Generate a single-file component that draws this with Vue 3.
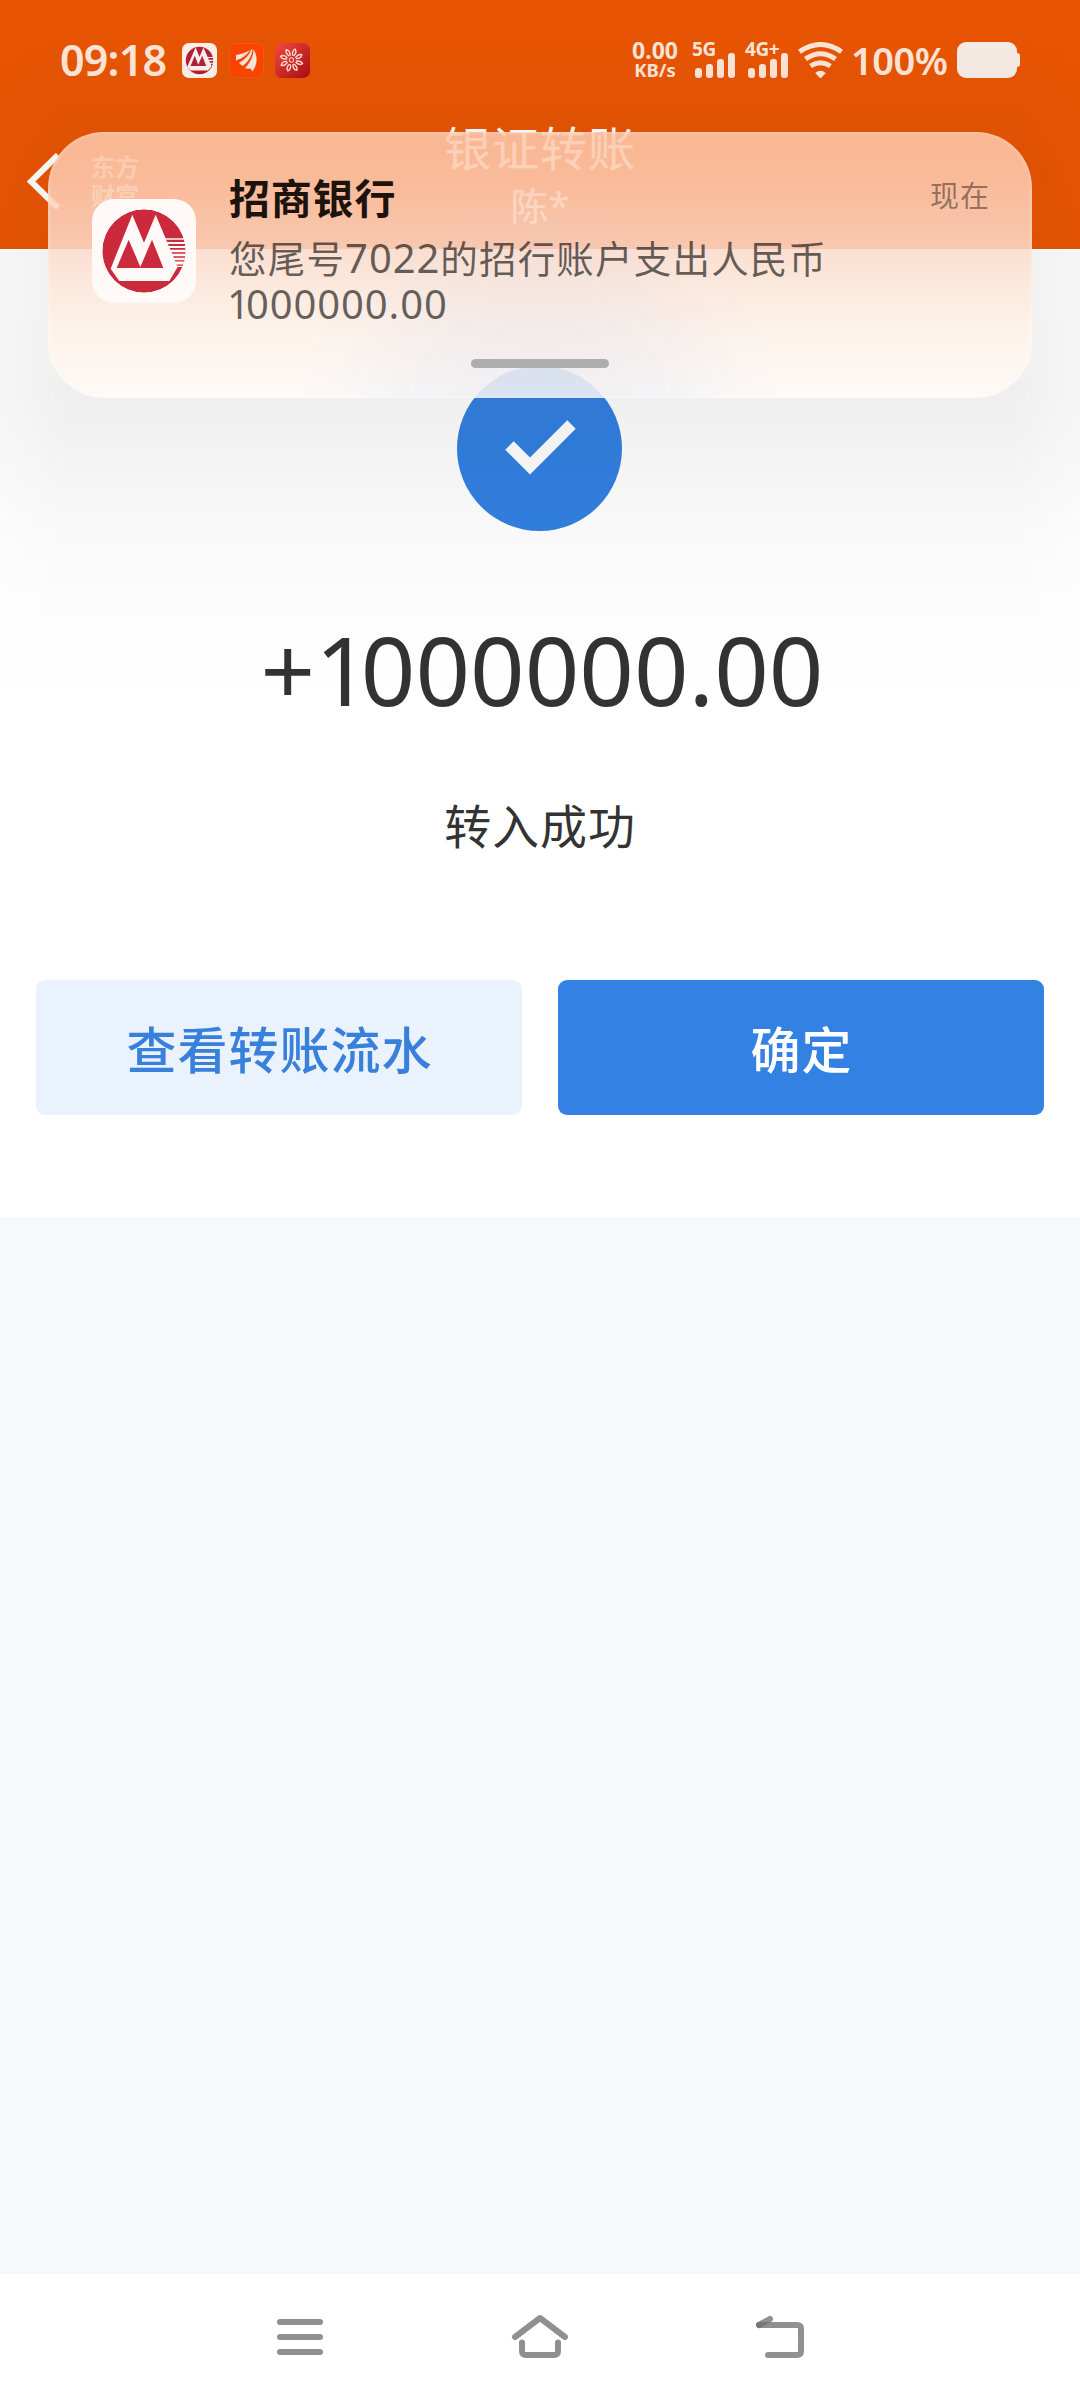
<script setup>
const signals = [
  { label: '5G', cls: 'sim-a' },
  { label: '4G+', cls: 'sim-b' },
]
const bars = [10, 14, 19, 25]
const petals = [0, 45, 90, 135, 180, 225, 270, 315]
const stripes = [356, 368, 380, 392, 404, 416, 428]
</script>

<template>
  <div class="phone">
    <header class="header">
      <div class="status">
        <span class="clock">09:18</span>
        <span class="tray">
          <svg class="app" viewBox="276 236 312 312">
            <rect x="276" y="236" width="312" height="312" rx="62" fill="#fff3ee" />
            <circle cx="432" cy="392" r="122" fill="#b5203a" />
            <g stroke="#fff3ee" stroke-width="10"><path d="M500 365H556M500 391H556M500 417H556" /></g>
            <path d="M322 450L397 276L432 360L467 276L540 440L508 482H352Z" fill="#fff3ee" />
            <path d="M352 440L390 350L421 430L456 350L492 440Z" fill="#b5203a" />
          </svg>
          <svg class="app" viewBox="0 0 35 35">
            <rect x=".5" y=".5" width="34" height="34" rx="6.5" fill="#ff4600" stroke="#f25a1c" />
            <path d="M7 12C12 11.500 17 9.500 21 7C18 12 13 15.500 7 17.500Z" fill="#ffe8de" />
            <path d="M10 20C16 16.500 20.500 12 22 6.800L23.500 6C23 13 19 19 13.500 23Z" fill="#ffe8de" />
            <path d="M16 25C21 20 24.500 13 24.500 6.500C28.500 12 29 21 23.500 28.500L21.500 25.500C20 26 18 26 16 25Z" fill="#ffe8de" />
          </svg>
          <svg class="app" viewBox="0 0 35 35">
            <defs>
              <linearGradient id="redTile" x1="0" y1="0" x2="1" y2="1">
                <stop offset="0" stop-color="#fb4a43" />
                <stop offset="1" stop-color="#a80d12" />
              </linearGradient>
            </defs>
            <rect width="35" height="35" rx="7" fill="url(#redTile)" />
            <g fill="none" stroke="#ffe0d8" stroke-width="1.4">
              <path
                v-for="a in petals" :key="a" d="M16.300 12.500Q13.800 8 16.500 5.500Q19.800 8 17.200 12.500"
                :transform="`rotate(${a + 18} 16.500 17)`"
              />
              <rect x="14.500" y="15" width="4" height="4" rx="1" stroke-width="1" transform="rotate(20 16.500 17)" />
            </g>
          </svg>
        </span>
        <span class="rate"><b>0.00</b><i>KB/s</i></span>
        <span v-for="s in signals" :key="s.label" class="sim" :class="s.cls">
          <em>{{ s.label }}</em>
          <span class="bars"><span v-for="h in bars" :key="h" :style="{ height: h + 'px' }"></span></span>
        </span>
        <svg class="wifi" viewBox="0 0 45 36">
          <g fill="none" stroke="#ffe8da" stroke-width="5">
            <path d="M1.500 9.800Q22.500 -4.800 43.500 9.800" />
            <path d="M7.500 17Q22.500 6.500 37.500 17" />
            <path d="M12.500 24Q22.500 17.500 32.500 24" />
          </g>
          <path d="M17.200 31Q22.500 26.500 27.800 31L24 35Q22.500 37 21 35Z" fill="#ffe8da" />
        </svg>
        <span class="percent">100%</span>
        <svg class="battery" viewBox="0 0 63 36">
          <rect width="60" height="36" rx="9" fill="#f9ede8" />
          <rect x="56" y="11" width="7" height="14" rx="3" fill="#f9ede8" />
        </svg>
      </div>
      <div class="titlebar">
        <div class="left">
          <svg class="back" viewBox="0 0 34 56">
            <path d="M31 2L4 28.500L31 55" fill="none" stroke="#fff" stroke-width="6" />
          </svg>
          <div class="brand"><span>东方</span><span>财富</span></div>
        </div>
        <div class="heading">
          <div class="title">银证转账</div>
          <div class="user">陈*</div>
        </div>
        <div class="right"></div>
      </div>
    </header>

    <main class="result">
      <svg class="check" viewBox="0 0 165 165">
        <circle cx="82.500" cy="82.500" r="82.500" fill="#3381e3" />
        <path d="M52.500 79.500L73 100L114.500 58.500" fill="none" stroke="#fff" stroke-width="12" />
      </svg>
      <div class="amount"><span class="plus">+</span><span class="one">1</span>000000.00</div>
      <div class="message">转入成功</div>
      <div class="actions">
        <button class="btn light">查看转账流水</button>
        <button class="btn solid">确定</button>
      </div>
    </main>

    <div class="filler"></div>

    <nav class="nav">
      <svg viewBox="0 0 60 48"><path d="M10 9H50M10 24H50M10 39H50" /></svg>
      <svg viewBox="0 0 60 48"><path d="M5 24L30 5L55 24M12 29.500V38Q12 42 16 42H44Q48 42 48 38V29.500" /></svg>
      <svg viewBox="0 0 60 48">
        <path d="M9 12H47Q51 12 51 16V38Q51 42 47 42H18" /><path class="tick" d="M9 12L20 6" />
      </svg>
    </nav>

    <div class="shade"></div>
    <section class="notice">
      <svg class="bank" viewBox="276 236 312 312">
        <defs><clipPath id="disc"><circle cx="432" cy="392" r="125" /></clipPath></defs>
        <rect x="276" y="236" width="312" height="312" rx="66" fill="#fffaf8" />
        <g clip-path="url(#disc)">
          <circle cx="432" cy="392" r="125" fill="#cb2a3c" />
          <path v-for="(y, i) in stripes" :key="y" :d="`M490 ${y}H560`" stroke="#fffaf8" :stroke-width="5 + i * 0.6" />
          <path d="M523 438H560" stroke="#fffaf8" stroke-width="4" />
        </g>
        <path d="M332 445L397 283L432 367L467 283L533 440L508 482H358Z" fill="#fffaf8" />
        <path d="M350 443L386 358L421 440L456 358L490 443Z" fill="#cb2a3c" />
      </svg>
      <div class="copy">
        <div class="top"><span class="name">招商银行</span><span class="time">现在</span></div>
        <div class="text">您尾号<span class="num">7022</span>的招行账户支出人民币</div>
        <div class="text"><span class="num"><span class="first">1</span>000000.00</span></div>
      </div>
      <div class="handle"></div>
    </section>
  </div>
</template>

<style>
body {
  margin: 0;
}
</style>

<style scoped>
.phone {
  position: relative;
  display: flex;
  flex-direction: column;
  width: 1080px;
  height: 2400px;
  overflow: hidden;
  background: #f7f8fa;
  font-family: "Noto Sans", "Noto Sans CJK SC", sans-serif;
}
.header {
  height: 249px;
  background: #ea5604;
  color: #fff;
}
.status {
  display: flex;
  align-items: center;
  box-sizing: border-box;
  height: 120px;
  padding-left: 60px;
  color: #ffe8da;
}
.clock {
  width: 122px;
  font-size: 43px;
  font-weight: 600;
  line-height: 50px;
  letter-spacing: -0.8px;
}
.tray {
  display: flex;
  gap: 11.5px;
  width: 450px;
}
.app {
  width: 35px;
  height: 35px;
}
.rate {
  display: flex;
  flex-direction: column;
  align-items: center;
  width: 46px;
  margin-right: 14px;
}
.rate b {
  font-size: 23px;
  font-weight: 700;
  line-height: 19px;
}
.rate i {
  font-size: 18.5px;
  font-style: normal;
  font-weight: 700;
  line-height: 19px;
}
.sim {
  display: flex;
  flex-direction: column;
  height: 36px;
  position: relative;
}
.sim-a {
  width: 53px;
}
.sim-b {
  width: 53px;
}
.sim em {
  position: absolute;
  top: 0;
  left: 0;
  font-size: 19px;
  font-style: normal;
  font-weight: 700;
  line-height: 14px;
  letter-spacing: -0.4px;
}
.bars {
  display: flex;
  align-items: flex-end;
  gap: 4px;
  height: 36px;
  padding-left: 3px;
}
.bars span {
  width: 7px;
  border-radius: 3px;
  background: #ffe8da;
}
.wifi {
  width: 45px;
  height: 36px;
}
.percent {
  width: 106px;
  margin-left: 8px;
  font-size: 38px;
  font-weight: 600;
  line-height: 44px;
  letter-spacing: -0.5px;
}
.battery {
  width: 63px;
  height: 36px;
}
.titlebar {
  display: flex;
  height: 129px;
}
.left,
.right {
  width: 340px;
}
.left {
  display: flex;
  align-items: flex-start;
}
.back {
  width: 34px;
  height: 56px;
  margin: 33px 30px 0 27px;
}
.brand {
  display: flex;
  flex-direction: column;
  margin-top: 31px;
  font-family: "Noto Sans CJK SC", sans-serif;
  font-size: 24px;
  font-weight: 700;
  line-height: 29px;
  opacity: 0.75;
}
.heading {
  width: 400px;
  text-align: center;
}
.title {
  font-size: 47px;
  line-height: 56px;
  letter-spacing: 1px;
}
.user {
  margin-top: 4px;
  font-size: 38px;
  line-height: 50px;
}
.result {
  display: flex;
  flex-direction: column;
  align-items: center;
  box-sizing: border-box;
  height: 968px;
  padding-top: 117px;
  background: #fff;
  color: #333;
}
.check {
  width: 165px;
  height: 165px;
  margin-right: 1px;
}
.amount {
  margin-top: 78px;
  padding-left: 4px;
  margin-bottom: 1px;
  font-size: 95.5px;
  line-height: 120px;
  white-space: nowrap;
}
.one {
  letter-spacing: -9px;
}
.message {
  margin-top: 66px;
  font-size: 47px;
  line-height: 60px;
  letter-spacing: 0.9px;
}
.actions {
  display: flex;
  gap: 36px;
  margin-top: 124px;
}
.btn {
  width: 486px;
  height: 135px;
  padding: 0 0 1px 1px;
  border: 0;
  border-radius: 9px;
  font-family: inherit;
  font-size: 50px;
  font-weight: 500;
  letter-spacing: 1px;
}
.light {
  background: #eaf3fd;
  color: #3880dc;
}
.solid {
  background: #3381e3;
  color: #fff;
}
.filler {
  flex: 1;
}
.nav {
  display: flex;
  justify-content: center;
  align-items: center;
  gap: 180px;
  height: 126px;
  background: #fff;
}
.nav svg {
  width: 60px;
  height: 48px;
  fill: none;
  stroke: #909090;
  stroke-width: 6;
  stroke-linecap: round;
  stroke-linejoin: round;
}
.nav .tick {
  stroke: rgba(112, 112, 112, 0.775);
}
.shade {
  position: absolute;
  top: 0;
  left: 0;
  width: 1080px;
  height: 700px;
  background: linear-gradient(
    rgba(0, 0, 0, 0.005),
    rgba(0, 0, 0, 0.038) 125px,
    rgba(0, 0, 0, 0.058) 250px,
    rgba(0, 0, 0, 0.064) 390px,
    rgba(0, 0, 0, 0.05) 445px,
    rgba(0, 0, 0, 0.023) 530px,
    rgba(0, 0, 0, 0.01) 600px,
    rgba(0, 0, 0, 0) 700px
  );
  mask-image: linear-gradient(90deg, rgba(0, 0, 0, 0.6), #000 70px, #000 1010px, rgba(0, 0, 0, 0.6));
  pointer-events: none;
}
.notice {
  position: absolute;
  top: 132px;
  left: 48px;
  display: flex;
  box-sizing: border-box;
  width: 984px;
  height: 266px;
  padding: 67px 42px 0 44px;
  border-radius: 56px;
  background:
    radial-gradient(ellipse 250px 200px at 50% 100%, rgba(190, 202, 238, 0.21), rgba(190, 202, 238, 0.14) 45%, rgba(190, 202, 238, 0.04) 80%, rgba(190, 202, 238, 0)),
    linear-gradient(
      rgba(253, 200, 170, 0.86),
      rgba(253, 205, 180, 0.86) 20%,
      rgba(253, 220, 204, 0.86) 44%,
      rgba(254, 233, 219, 0.86) 60%,
      rgba(255, 243, 234, 0.86) 76%,
      rgba(255, 252, 248, 0.86)
    );
  box-shadow: inset 0 0 4px rgba(255, 255, 255, 0.45);
}
.bank {
  flex: none;
  width: 104px;
  height: 104px;
}
.copy {
  flex: 1;
  margin: -28px 0 0 33px;
}
.top {
  display: flex;
  justify-content: space-between;
  height: 64px;
}
.name {
  color: #1c130c;
  font-size: 41px;
  font-weight: 700;
  line-height: 54px;
  letter-spacing: 0.8px;
}
.time {
  color: rgba(0, 0, 0, 0.42);
  font-size: 29px;
  line-height: 50px;
  letter-spacing: 1px;
}
.text {
  height: 46px;
  color: rgba(0, 0, 0, 0.6);
  font-size: 37.5px;
  line-height: 46px;
  letter-spacing: 1.2px;
  white-space: nowrap;
}
.num {
  font-size: 40px;
  letter-spacing: 0.9px;
}
.text > .num:not(:only-child) {
  margin-left: -2px;
  letter-spacing: 0;
}
.first {
  margin-left: -2px;
  letter-spacing: -4px;
}
.handle {
  position: absolute;
  top: 227px;
  left: 423px;
  width: 138px;
  height: 9px;
  border-radius: 5px;
  background: #adadb0;
}
</style>
